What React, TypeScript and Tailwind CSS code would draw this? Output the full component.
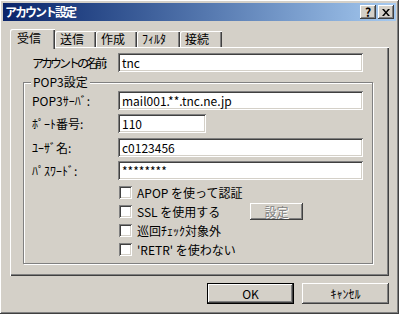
import React from 'react';

const raised =
  'shadow-[inset_-1px_-1px_#404040,inset_1px_1px_#ffffff,inset_-2px_-2px_#808080,inset_2px_2px_#d4d0c8]';
const sunken =
  'shadow-[inset_1px_1px_#808080,inset_-1px_-1px_#ffffff,inset_2px_2px_#404040,inset_-2px_-2px_#d4d0c8]';

function Field({ label, value, width, tight }: { label: string; value: string; width: string; tight?: boolean }) {
  return (
    <div className="flex h-[19px] items-center">
      <span className={`w-[86px] shrink-0 whitespace-nowrap ${tight ? 'tracking-[-3px]' : ''}`}>{label}</span>
      <div className={`flex h-[19px] items-center bg-white pl-[4px] ${sunken} ${width}`}>{value}</div>
    </div>
  );
}

function Check({ label, children }: { label: string; children?: React.ReactNode }) {
  return (
    <div className="flex h-[19px] items-center">
      <div className={`h-[13px] w-[13px] shrink-0 bg-white ${sunken}`} />
      <span className={children ? 'ml-[5px] w-[113px] whitespace-nowrap' : 'ml-[5px] whitespace-nowrap'}>{label}</span>
      {children}
    </div>
  );
}

function Tab({ label, w, active }: { label: string; w: string; active?: boolean }) {
  if (active) {
    return (
      <div
        className={`relative z-10 -mb-[2px] flex h-[20px] items-center rounded-tl-[2px] bg-[#d4d0c8] pb-[2px] pl-[7px] ${w} shadow-[inset_1px_1px_#ffffff,inset_-1px_0_#404040,inset_-2px_0_#808080]`}
      >
        {label}
      </div>
    );
  }
  return (
    <div
      className={`flex h-[16px] items-center rounded-tl-[2px] bg-[#d4d0c8] pl-[5px] ${w} shadow-[inset_1px_1px_#ffffff,inset_-1px_0_#404040,inset_-2px_0_#808080]`}
    >
      {label}
    </div>
  );
}

export default function App() {
  return (
    <div
      className={`flex h-[314px] w-[399px] flex-col bg-[#d4d0c8] p-[3px] font-['Noto_Sans_CJK_JP',sans-serif] text-[12px] leading-none text-black ${raised}`}
    >
      {/* title bar */}
      <div className="flex h-[18px] shrink-0 items-center bg-gradient-to-r from-[#0a246a] to-[#a6caf0] pl-[2px] pr-[2px]">
        <span className="font-bold tracking-[-2px] text-white">アカウント設定</span>
        <div className="ml-auto flex gap-[2px]">
          <div className={`flex h-[14px] w-[16px] items-center justify-center bg-[#d4d0c8] pb-[1px] text-[12px] font-bold ${raised}`}>
            ?
          </div>
          <div className={`flex h-[14px] w-[16px] items-center justify-center bg-[#d4d0c8] ${raised}`}>
            <svg width="8" height="7" viewBox="0 0 8 7">
              <path d="M0 0h2l2 2.5L6 0h2L5 3.5 8 7H6L4 4.5 2 7H0l3-3.5z" fill="#000" />
            </svg>
          </div>
        </div>
      </div>

      {/* client */}
      <div className="flex flex-1 flex-col px-[7px]">
        {/* tabs */}
        <div className="mt-[8px] flex h-[18px] items-end">
          <Tab label="受信" w="w-[45px]" active />
          <Tab label="送信" w="w-[41px]" />
          <Tab label="作成" w="w-[41px]" />
          <Tab label="ﾌｨﾙﾀ" w="w-[43px]" />
          <Tab label="接続" w="w-[42px]" />
        </div>

        {/* tab page */}
        <div className="flex h-[229px] flex-col pl-[22px] pt-[6px] shadow-[inset_1px_1px_#ffffff,inset_-1px_-1px_#404040,inset_-2px_-2px_#808080]">
          <Field label="アカウントの名前:" value="tnc" width="w-[245px]" tight />

          {/* POP3 group */}
          <div className="relative -ml-[9px] mt-[10px] h-[182px] w-[350px] border border-[#808080] pl-[8px] pt-[8px] shadow-[1px_1px_#ffffff,inset_1px_1px_#ffffff]">
            <span className="absolute -top-[7px] left-[7px] bg-[#d4d0c8] px-[2px]">POP3設定</span>
            <div className="flex flex-col">
              <Field label="POP3ｻｰﾊﾞ:" value="mail001.**.tnc.ne.jp" width="w-[245px]" />
              <div className="mt-[4px]">
                <Field label="ﾎﾟｰﾄ番号:" value="110" width="w-[88px]" />
              </div>
              <div className="mt-[5px]">
                <Field label="ﾕｰｻﾞ名:" value="c0123456" width="w-[245px]" />
              </div>
              <div className="mt-[4px]">
                <Field label="ﾊﾟｽﾜｰﾄﾞ:" value="********" width="w-[245px]" />
              </div>
              <div className="ml-[87px] mt-[3px] flex flex-col">
                <Check label="APOP を使って認証" />
                <Check label="SSL を使用する">
                  <div
                    className={`flex h-[17px] w-[53px] items-center justify-center bg-[#d4d0c8] text-[#808080] [text-shadow:1px_1px_#ffffff] ${raised}`}
                  >
                    設定
                  </div>
                </Check>
                <Check label="巡回ﾁｪｯｸ対象外" />
                <Check label="'RETR' を使わない" />
              </div>
            </div>
          </div>
        </div>

        {/* buttons */}
        <div className="mt-[7px] flex justify-end gap-[8px]">
          <div className="h-[21px] w-[87px] border border-black">
            <div className={`flex h-full w-full items-center justify-center bg-[#d4d0c8] ${raised}`}>OK</div>
          </div>
          <div className={`flex h-[21px] w-[87px] items-center justify-center bg-[#d4d0c8] ${raised}`}>ｷｬﾝｾﾙ</div>
        </div>
      </div>
    </div>
  );
}
